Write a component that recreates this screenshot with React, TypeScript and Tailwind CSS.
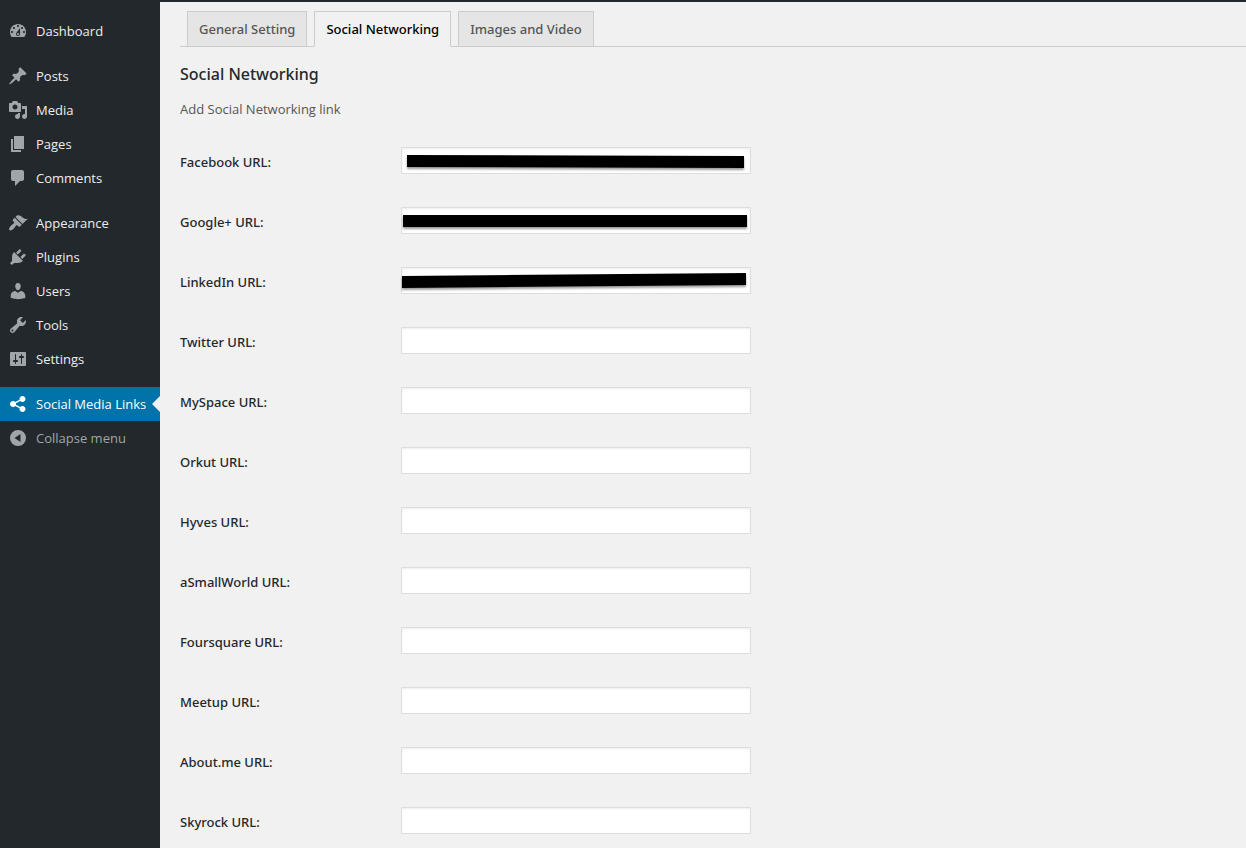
import type { ReactNode } from 'react';

type MenuItem = { label: string; path: string };

const menuGroups: MenuItem[][] = [
  [
    {
      label: 'Dashboard',
      path: 'M3.76 16h12.48c1.1-1.37 1.76-3.11 1.76-5 0-4.42-3.58-8-8-8s-8 3.58-8 8c0 1.89.66 3.63 1.76 5zM10 4c.55 0 1 .45 1 1s-.45 1-1 1-1-.45-1-1 .45-1 1-1zM6 6c.55 0 1 .45 1 1s-.45 1-1 1-1-.45-1-1 .45-1 1-1zm8 0c.55 0 1 .45 1 1s-.45 1-1 1-1-.45-1-1 .45-1 1-1zm-5.37 5.55L12 7v6c0 1.1-.9 2-2 2s-2-.9-2-2c0-.57.24-1.08.63-1.45zM4 10c.55 0 1 .45 1 1s-.45 1-1 1-1-.45-1-1 .45-1 1-1zm12 0c.55 0 1 .45 1 1s-.45 1-1 1-1-.45-1-1 .45-1 1-1zm-5 3c0-.55-.45-1-1-1s-1 .45-1 1 .45 1 1 1 1-.45 1-1z',
    },
  ],
  [
    {
      label: 'Posts',
      path: 'M10.44 3.02l1.82-1.82 6.36 6.35-1.83 1.82c-1.05-.68-2.48-.57-3.41.36l-.75.75c-.92.93-1.04 2.35-.35 3.41l-1.83 1.82-2.41-2.41-2.8 2.79c-.42.42-3.38 2.71-3.8 2.29s1.86-3.39 2.28-3.81l2.79-2.79L4.1 9.36l1.83-1.82c1.05.69 2.48.57 3.4-.36l.75-.75c.93-.92 1.05-2.35.36-3.41z',
    },
    {
      label: 'Media',
      path: 'M13 11V4c0-.55-.45-1-1-1h-1.67L9 1H5L3.67 3H2c-.55 0-1 .45-1 1v7c0 .55.45 1 1 1h10c.55 0 1-.45 1-1zM7 4.5c1.38 0 2.5 1.12 2.5 2.5S8.38 9.5 7 9.5 4.5 8.38 4.5 7 5.62 4.5 7 4.5zM14 6h5v10.5c0 1.38-1.12 2.5-2.5 2.5S14 17.88 14 16.5s1.12-2.5 2.5-2.5c.17 0 .34.02.5.05V9h-3V6zm-4 8.05V13h2v3.5c0 1.38-1.12 2.5-2.5 2.5S7 17.88 7 16.5 8.12 14 9.5 14c.17 0 .34.02.5.05z',
    },
    { label: 'Pages', path: 'M6 15V2h10v13H6zm-1 1h8v2H3V5h2v11z' },
    {
      label: 'Comments',
      path: 'M5 2h9c1.1 0 2 .9 2 2v7c0 1.1-.9 2-2 2h-2l-5 5v-5H5c-1.1 0-2-.9-2-2V4c0-1.1.9-2 2-2z',
    },
  ],
  [
    {
      label: 'Appearance',
      path: 'M14.48 11.06L7.41 3.99l1.5-1.5c.5-.56 2.3-.47 3.51.32 1.21.8 1.43 1.28 2.91 2.1 1.18.64 2.45 1.26 4.45.85zm-.71.71L6.7 4.7 4.93 6.47c-.39.39-.39 1.02 0 1.41l1.06 1.06c.39.39.39 1.03 0 1.42-.6.6-1.43 1.11-2.21 1.69-.35.26-.7.53-1.01.84C1.43 14.23.4 16.08 1.4 17.07c.99 1 2.84-.03 4.18-1.36.31-.31.58-.66.85-1.02.57-.78 1.08-1.61 1.69-2.21.39-.39 1.02-.39 1.41 0l1.06 1.06c.39.39 1.02.39 1.41 0z',
    },
    {
      label: 'Plugins',
      path: 'M13.11 4.36L9.87 7.6 8 5.73l3.24-3.24c.35-.34 1.05-.2 1.56.32.52.51.66 1.21.31 1.55zm-8 1.77l.91-1.12 9.01 9.01-1.19.84c-.71.71-2.63 1.16-3.82 1.16H6.14L4.9 17.26c-.59.59-1.54.59-2.12 0-.59-.58-.59-1.53 0-2.12l1.24-1.24v-3.88c0-1.13.4-3.19 1.09-3.89zm7.26 3.97l3.24-3.24c.34-.35 1.04-.21 1.55.31.52.51.66 1.21.31 1.55l-3.24 3.25z',
    },
    {
      label: 'Users',
      path: 'M10 9.25c-2.27 0-2.73-3.44-2.73-3.44C7 4.02 7.82 2 9.97 2c2.16 0 2.98 2.02 2.71 3.81 0 0-.41 3.44-2.68 3.44zm0 2.57L12.72 10c2.39 0 4.52 2.33 4.52 4.53v2.49s-3.65 1.13-7.24 1.13c-3.65 0-7.24-1.13-7.24-1.13v-2.49c0-2.25 1.94-4.48 4.47-4.48z',
    },
    {
      label: 'Tools',
      path: 'M16.68 9.77c-1.34 1.34-3.3 1.67-4.95.99l-5.41 6.52c-.99.99-2.59.99-3.58 0s-.99-2.59 0-3.57l6.52-5.42c-.68-1.65-.35-3.61.99-4.95 1.28-1.28 3.12-1.62 4.72-1.06l-2.89 2.89 2.82 2.82 2.86-2.87c.53 1.58.18 3.39-1.08 4.65zM3.81 16.21c.4.39 1.04.39 1.43 0 .4-.4.4-1.04 0-1.43-.39-.4-1.03-.4-1.43 0-.39.39-.39 1.03 0 1.43z',
    },
    {
      label: 'Settings',
      path: 'M18 16V4c0-.55-.45-1-1-1H3c-.55 0-1 .45-1 1v12c0 .55.45 1 1 1h14c.55 0 1-.45 1-1zM8 11h1c.55 0 1 .45 1 1s-.45 1-1 1H8v1.5c0 .28-.22.5-.5.5s-.5-.22-.5-.5V13H6c-.55 0-1-.45-1-1s.45-1 1-1h1V5.5c0-.28.22-.5.5-.5s.5.22.5.5V11zm5-2h-1c-.55 0-1-.45-1-1s.45-1 1-1h1V5.5c0-.28.22-.5.5-.5s.5.22.5.5V7h1c.55 0 1 .45 1 1s-.45 1-1 1h-1v5.5c0 .28-.22.5-.5.5s-.5-.22-.5-.5V9z',
    },
  ],
];

const sharePath =
  'M14.5 12c1.66 0 3 1.34 3 3s-1.34 3-3 3-3-1.34-3-3c0-.24.03-.46.09-.69l-4.38-2.3c-.55.61-1.33.99-2.21.99-1.66 0-3-1.34-3-3s1.34-3 3-3c.88 0 1.66.39 2.21.99l4.38-2.3c-.06-.23-.09-.45-.09-.69 0-1.66 1.34-3 3-3s3 1.34 3 3-1.34 3-3 3c-.88 0-1.66-.39-2.21-.99l-4.38 2.3c.06.23.09.45.09.69s-.03.46-.09.69l4.38 2.3c.55-.61 1.33-.99 2.21-.99z';

const collapsePath = 'M10 2a8 8 0 1 0 0 16a8 8 0 1 0 0-16zM12.5 6v8L6.5 10z';

const fields: { label: string; mask?: ReactNode }[] = [
  { label: 'Facebook', mask: <polygon points="6,8 343,9 343,21 6,20" /> },
  { label: 'Google+', mask: <polygon points="2,8 346,8 346,20 2,20" /> },
  { label: 'LinkedIn', mask: <polygon points="1,9 345,6 345,18 1,21" /> },
  { label: 'Twitter' },
  { label: 'MySpace' },
  { label: 'Orkut' },
  { label: 'Hyves' },
  { label: 'aSmallWorld' },
  { label: 'Foursquare' },
  { label: 'Meetup' },
  { label: 'About.me' },
  { label: 'Skyrock' },
];

const tabs = ['General Setting', 'Social Networking', 'Images and Video'];

function Icon({ path }: { path: string }) {
  return (
    <svg viewBox="0 0 20 20" className="size-5 shrink-0" fill="currentColor" fillRule="evenodd" aria-hidden="true">
      <path d={path} />
    </svg>
  );
}

function Sidebar() {
  return (
    <nav className="w-40 shrink-0 bg-[#23282d] pt-3.5 text-[13px] leading-[18px] text-[#eeeeee]">
      {menuGroups.map((group) => (
        <ul key={group[0].label} className="mb-[11px]">
          {group.map((item) => (
            <li key={item.label}>
              <a href="#" className="flex h-[34px] items-center gap-2 pl-2 whitespace-nowrap">
                <span className="text-[#a0a5aa]">
                  <Icon path={item.path} />
                </span>
                {item.label}
              </a>
            </li>
          ))}
        </ul>
      ))}
      <a
        href="#"
        aria-current="page"
        className="relative flex h-[34px] items-center gap-2 bg-[#0073aa] pl-2 whitespace-nowrap text-white"
      >
        <Icon path={sharePath} />
        Social Media Links
        <span className="absolute top-[9px] right-0 border-8 border-l-0 border-transparent border-r-[#f1f1f1]" />
      </a>
      <button type="button" className="flex h-[34px] w-full items-center gap-2 pl-2 text-[#a0a5aa]">
        <Icon path={collapsePath} />
        Collapse menu
      </button>
    </nav>
  );
}

export default function App() {
  return (
    <div className="flex min-h-screen bg-[#f1f1f1] font-['Open_Sans','Noto_Sans',sans-serif] text-[#23282d]">
      <Sidebar />
      <main className="min-w-0 flex-1 border-t-2 border-[#23282d] pt-[9px] pl-5">
        <div className="flex items-end gap-[7px] border-b border-[#cccccc] pl-[7px] font-['Noto_Sans','Open_Sans',sans-serif] text-[13px] leading-6 font-medium">
          {tabs.map((tab) => (
            <a
              key={tab}
              href="#"
              className={
                tab === 'Social Networking'
                  ? '-mb-px border border-[#cccccc] border-b-[#f1f1f1] bg-[#f1f1f1] px-[11px] py-[5px] text-black'
                  : 'border border-b-0 border-[#cccccc] bg-[#e5e5e5] px-[11px] py-[5px] text-[#555555]'
              }
            >
              {tab}
            </a>
          ))}
        </div>
        <h2 className="mt-[15px] font-['Noto_Sans','Open_Sans',sans-serif] text-base leading-6 font-medium">
          Social Networking
        </h2>
        <p className="mt-[13px] text-[13px] leading-5 text-[#555555]">Add Social Networking link</p>
        <form className="mt-7 flex flex-col gap-[33px]">
          {fields.map(({ label, mask }) => (
            <div key={label} className="flex">
              <label
                htmlFor={label}
                className="w-[221px] pt-[5px] font-['Noto_Sans','Open_Sans',sans-serif] text-[13px] leading-5 font-medium"
              >
                {label} URL:
              </label>
              <div className="relative">
                <input
                  id={label}
                  type="text"
                  className="block h-[27px] w-[350px] border border-[#dddddd] bg-white px-1.5 text-sm shadow-[inset_0_1px_2px_rgba(0,0,0,0.07)] outline-none"
                />
                {mask && (
                  <svg
                    viewBox="0 0 350 27"
                    className="pointer-events-none absolute inset-0 h-full w-full drop-shadow-[0_2px_1px_rgba(0,0,0,0.4)]"
                    aria-hidden="true"
                  >
                    {mask}
                  </svg>
                )}
              </div>
            </div>
          ))}
        </form>
      </main>
    </div>
  );
}
